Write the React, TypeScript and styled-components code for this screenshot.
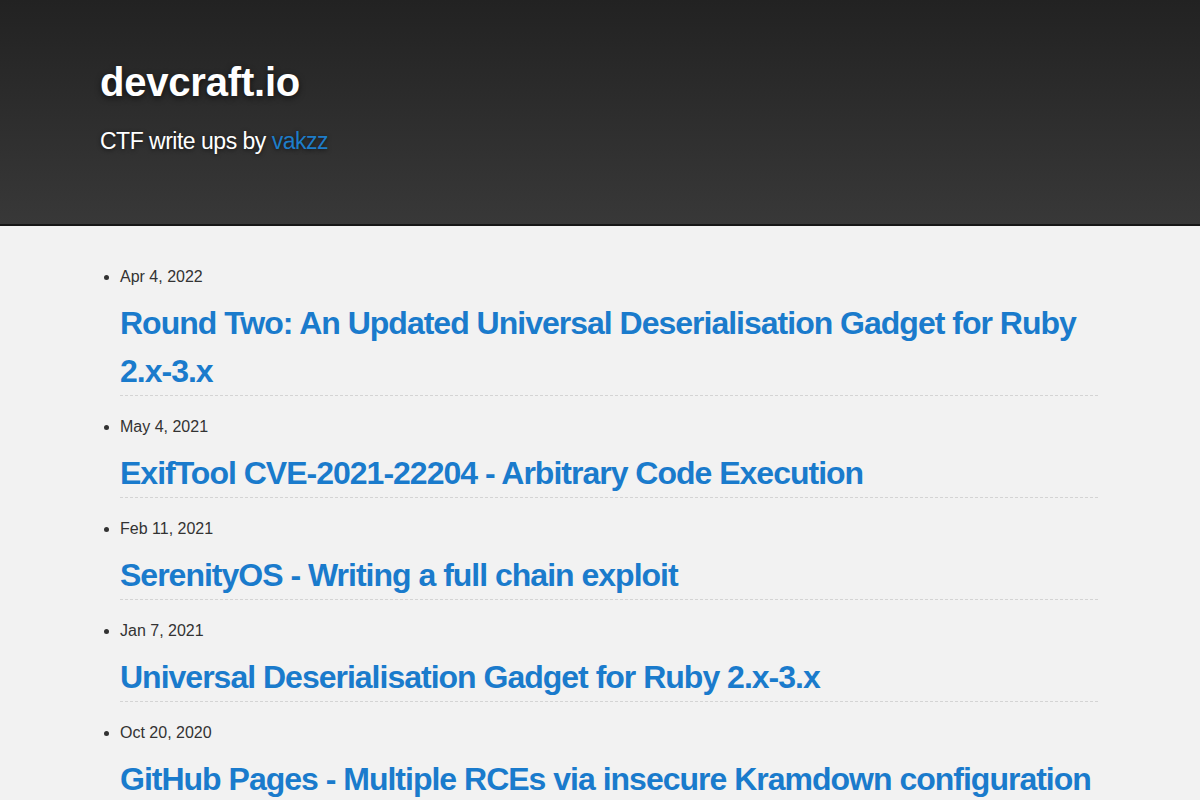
import styled, { createGlobalStyle } from "styled-components";

const GlobalStyle = createGlobalStyle`
  html, body {
    margin: 0;
    padding: 0;
    background: #f2f2f2;
    font-family: "Liberation Sans", Arial, Helvetica, sans-serif;
    color: #333333;
  }
`;

const Header = styled.header`
  height: 226px;
  background: linear-gradient(to bottom, #222222 0%, #383838 100%);
  border-bottom: 2px solid #161616;
  box-sizing: border-box;
`;

const Inner = styled.div`
  max-width: 1000px;
  margin: 0 auto;
  padding: 55px 0 0;
`;

const SiteTitle = styled.h1`
  margin: 0;
  font-size: 40px;
  line-height: 54px;
  font-weight: 700;
  letter-spacing: -0.2px;
  color: #ffffff;
  text-shadow: 0 2px 6px rgba(0, 0, 0, 0.6);
`;

const Tagline = styled.p`
  margin: 16px 0 0;
  font-size: 23px;
  line-height: 32px;
  letter-spacing: -0.5px;
  color: #ffffff;
  text-shadow: 0 1px 4px rgba(0, 0, 0, 0.6);
`;

const Author = styled.a`
  color: #1e7dc9;
  text-decoration: none;
`;

const Main = styled.main`
  max-width: 1000px;
  margin: 0 auto;
  padding: 39px 0 0;
`;

const PostList = styled.ul`
  margin: 0;
  padding-left: 20px;
`;

const PostItem = styled.li`
  margin-bottom: 19px;
  font-size: 16px;
`;

const PostDate = styled.span`
  display: block;
  line-height: 24px;
  color: #333333;
`;

const PostTitle = styled.h2`
  margin: 10px 2px 0 0;
  font-size: 32px;
  line-height: 48px;
  font-weight: 700;
  letter-spacing: -1px;
  border-bottom: 1px dashed #d4d4d4;
`;

const PostLink = styled.a`
  color: #1a7bcc;
  text-decoration: none;
`;

const posts = [
  {
    date: "Apr 4, 2022",
    title: "Round Two: An Updated Universal Deserialisation Gadget for Ruby 2.x-3.x",
  },
  { date: "May 4, 2021", title: "ExifTool CVE-2021-22204 - Arbitrary Code Execution" },
  { date: "Feb 11, 2021", title: "SerenityOS - Writing a full chain exploit" },
  { date: "Jan 7, 2021", title: "Universal Deserialisation Gadget for Ruby 2.x-3.x" },
  {
    date: "Oct 20, 2020",
    title: "GitHub Pages - Multiple RCEs via insecure Kramdown configuration",
  },
];

const App = () => {
  return (
    <>
      <GlobalStyle />
      <Header>
        <Inner>
          <SiteTitle>devcraft.io</SiteTitle>
          <Tagline>
            CTF write ups by <Author href="#">vakzz</Author>
          </Tagline>
        </Inner>
      </Header>
      <Main>
        <PostList>
          {posts.map((post) => (
            <PostItem key={post.title}>
              <PostDate>{post.date}</PostDate>
              <PostTitle>
                <PostLink href="#">{post.title}</PostLink>
              </PostTitle>
            </PostItem>
          ))}
        </PostList>
      </Main>
    </>
  );
};

export default App;
